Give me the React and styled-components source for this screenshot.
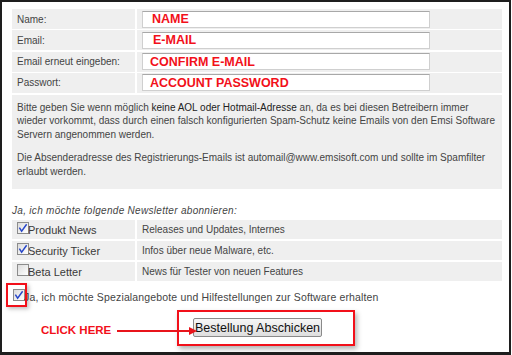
import * as React from "react";
import styled, { createGlobalStyle } from "styled-components";

const Global = createGlobalStyle`
  html, body { margin: 0; padding: 0; background: #ffffff; }
  body { font-family: "Liberation Sans", Arial, sans-serif; }
`;

const fields = [
  { label: "Name:", value: "NAME", indent: 9 },
  { label: "Email:", value: "E-MAIL", indent: 10 },
  { label: "Email erneut eingeben:", value: "CONFIRM E-MAIL", indent: 7 },
  { label: "Passwort:", value: "ACCOUNT PASSWORD", indent: 7 },
];

const newsletters = [
  { name: "Produkt News", info: "Releases und Updates, Internes", checked: true },
  { name: "Security Ticker", info: "Infos über neue Malware, etc.", checked: true },
  { name: "Beta Letter", info: "News für Tester von neuen Features", checked: false },
];

const Check = ({ checked }) => (
  <Box>
    {checked && (
      <svg width="11" height="11" viewBox="0 0 11 11">
        <path d="M1.5 4.5 L4 8.5 L9.5 0.8" fill="none" stroke="#2746c9" strokeWidth="1.6" />
      </svg>
    )}
  </Box>
);

const App = () => {
  return (
    <Frame>
      <Global />
      <FieldGrid>
        {fields.map((f) => (
          <React.Fragment key={f.label}>
            <LabelCell>{f.label}</LabelCell>
            <ValueCell>
              <Input>
                <RedValue $indent={f.indent}>{f.value}</RedValue>
              </Input>
            </ValueCell>
          </React.Fragment>
        ))}
      </FieldGrid>
      <Info>
        <p>
          Bitte geben Sie wenn möglich <Strong>keine AOL oder Hotmail-Adresse</Strong> an, da es bei diesen Betreibern immer
          <br />
          wieder vorkommt, dass durch einen falsch konfigurierten Spam-Schutz keine Emails von den Emsi Software
          <br />
          Servern angenommen werden.
        </p>
        <p>
          Die Absenderadresse des Registrierungs-Emails ist automail@www.emsisoft.com und sollte im Spamfilter
          <br />
          erlaubt werden.
        </p>
      </Info>
      <Heading>Ja, ich möchte folgende Newsletter abonnieren:</Heading>
      <NewsGrid>
        {newsletters.map((n) => (
          <React.Fragment key={n.name}>
            <NewsName>
              <Check checked={n.checked} />
              <span>{n.name}</span>
            </NewsName>
            <NewsInfo>{n.info}</NewsInfo>
          </React.Fragment>
        ))}
      </NewsGrid>
      <Special>
        <Marker />
        <Check checked />
        <span>Ja, ich möchte Spezialangebote und Hilfestellungen zur Software erhalten</span>
      </Special>
      <Bottom>
        <ClickHere>CLICK HERE</ClickHere>
        <Arrow width="82" height="10" viewBox="0 0 82 10">
          <line x1="0" y1="5" x2="74" y2="5" stroke="#e8141b" strokeWidth="2" />
          <path d="M72 1 L80 5 L72 9 Z" fill="#e8141b" />
        </Arrow>
        <ButtonBox>
          <Submit>Bestellung Abschicken</Submit>
        </ButtonBox>
      </Bottom>
    </Frame>
  );
};

const Frame = styled.div`
  position: relative;
  box-sizing: border-box;
  width: 511px;
  height: 355px;
  border: 2px solid #1e1e1e;
  border-bottom-width: 3px;
  background: #ffffff;
  padding: 7px 8px 0 10px;
  color: #444444;
  font-size: 10px;
`;

const FieldGrid = styled.div`
  display: grid;
  grid-template-columns: 123px 365px;
  grid-auto-rows: 20px;
  column-gap: 2px;
  row-gap: 1.3px;
`;

const LabelCell = styled.div`
  display: flex;
  align-items: center;
  background: #efefef;
  padding-left: 5px;
`;

const ValueCell = styled.div`
  display: flex;
  align-items: center;
  background: #efefef;
  padding-left: 5px;
`;

const Input = styled.div`
  box-sizing: border-box;
  width: 288px;
  height: 17px;
  background: #ffffff;
  border: 1px solid #cfcfcf;
  border-top-color: #a8a8a8;
  display: flex;
  align-items: center;
  overflow: visible;
`;

const RedValue = styled.span`
  padding-left: ${(p) => p.$indent}px;
  color: #f2101a;
  font-weight: bold;
  font-size: 12.5px;
  white-space: nowrap;
`;

const Info = styled.div`
  margin-top: 2px;
  width: 490px;
  box-sizing: border-box;
  background: #efefef;
  padding: 6px 5px 11px;
  line-height: 13.5px;
  white-space: nowrap;

  p {
    margin: 0 0 10px;
  }
  p:last-child {
    margin: 0;
  }
`;

const Strong = styled.span`
  color: #222222;
`;

const Heading = styled.div`
  margin-top: 15px;
  font-style: italic;
  line-height: 14px;
  letter-spacing: 0.3px;
`;

const NewsGrid = styled.div`
  margin-top: 2px;
  display: grid;
  grid-template-columns: 123px 365px;
  grid-auto-rows: 19px;
  column-gap: 2px;
  row-gap: 2px;
`;

const NewsName = styled.div`
  display: flex;
  align-items: center;
  background: #efefef;
  padding-left: 5px;
  font-size: 11px;
  color: #3a3a3a;

  span:last-child {
    margin-left: -1px;
  }
`;

const NewsInfo = styled.div`
  display: flex;
  align-items: center;
  background: #efefef;
  padding-left: 5px;
`;

const Box = styled.span`
  box-sizing: border-box;
  flex: none;
  width: 12px;
  height: 12px;
  border: 1px solid #8c8c8c;
  background: linear-gradient(135deg, #dcdcdc, #ffffff);
  display: flex;
  align-items: flex-start;
  justify-content: center;
  margin-top: -4px;
`;

const Special = styled.div`
  position: relative;
  margin-top: 8px;
  height: 16px;
  display: flex;
  align-items: center;
  font-size: 10.5px;
  padding-left: 1px;
  letter-spacing: 0.15px;

  span:last-child {
    margin-left: -1px;
  }
`;

const Marker = styled.div`
  position: absolute;
  left: -6px;
  top: -6px;
  width: 21px;
  height: 24px;
  box-sizing: border-box;
  border: 2px solid #f2101a;
  box-shadow: 2px 2px 4px rgba(0, 0, 0, 0.25);
`;

const Bottom = styled.div`
  margin-top: 5px;
  display: flex;
  align-items: center;
  padding-left: 29px;
`;

const ClickHere = styled.div`
  width: 66px;
  color: #f2101a;
  font-weight: bold;
  font-size: 11.5px;
  white-space: nowrap;
  margin-top: 4px;
`;

const Arrow = styled.svg`
  position: relative;
  z-index: 1;
  margin-left: 10px;
  margin-right: -22px;
  margin-top: 6px;
  flex: none;
`;

const ButtonBox = styled.div`
  box-sizing: border-box;
  width: 178px;
  height: 36px;
  border: 2px solid #f2101a;
  box-shadow: 2px 3px 5px rgba(0, 0, 0, 0.3);
  padding: 6px 0 0 14px;
`;

const Submit = styled.button`
  box-sizing: border-box;
  width: 129px;
  height: 19px;
  padding: 0;
  border: 1px solid #8a8a8a;
  border-radius: 2px;
  background: linear-gradient(#f6f6f6, #dedede);
  color: #111111;
  font-family: "Liberation Sans", Arial, sans-serif;
  font-size: 12.5px;
`;

export default App;
